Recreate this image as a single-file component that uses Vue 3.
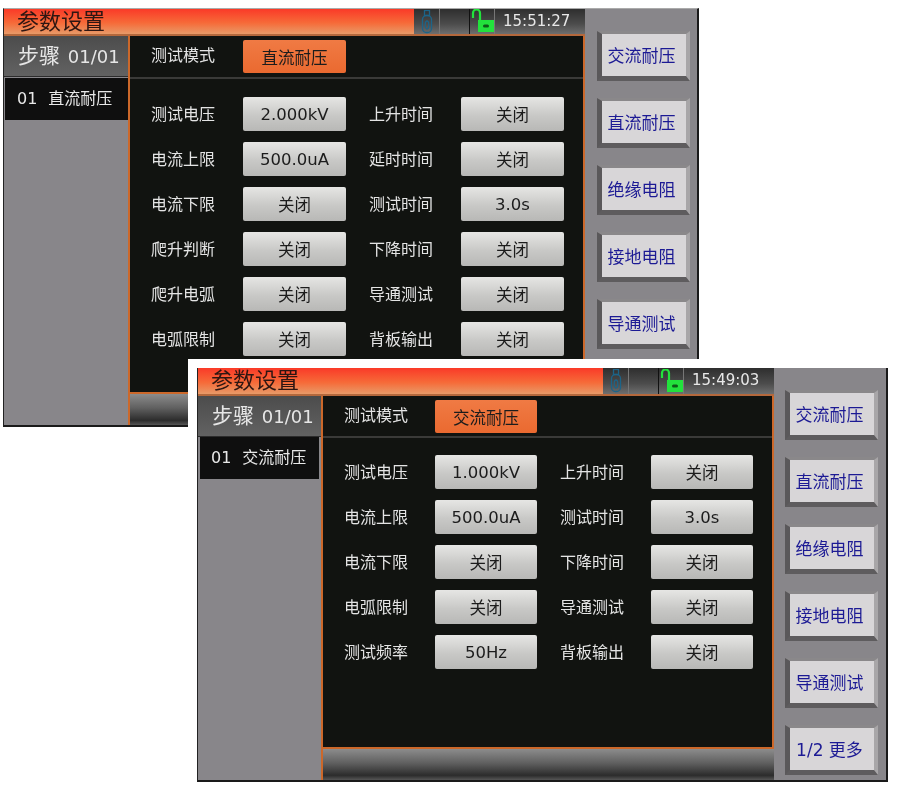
<template>
  <div class="desk">
    <div v-for="s in screens" :key="s.id" class="holder" :class="s.id">
      <div class="win">
        <div class="left">
          <!-- title bar -->
          <div class="titlebar">
            <div class="title">参数设置</div>
            <div class="status">
              <div class="cell usb">
                <svg width="14" height="24" viewBox="0 0 14 24" fill="none" stroke="#1c6488" stroke-width="1.3">
                  <rect x="4.5" y="0.5" width="5" height="5" />
                  <rect x="2.5" y="5.5" width="9" height="17" rx="4" />
                  <ellipse cx="7" cy="15" rx="1.8" ry="4" />
                </svg>
              </div>
              <div class="cell blank"></div>
              <div class="cell lock">
                <svg width="24" height="25" viewBox="0 0 24 25">
                  <path d="M3 9V4a3.5 3.5 0 0 1 7 0v7" fill="none" stroke="#22e23c" stroke-width="2.2" />
                  <rect x="8" y="11" width="16" height="12" fill="#22e23c" />
                  <rect x="13" y="15.5" width="6" height="3" rx="1.5" fill="#0d5a18" />
                </svg>
              </div>
              <div class="clock">{{ s.time }}</div>
            </div>
          </div>
          <div class="middle">
            <!-- step list -->
            <div class="side">
              <div class="step-head"><span class="step-cn">步骤</span> 01/01</div>
              <div class="step-row"><span class="step-no">01</span>{{ s.mode }}</div>
            </div>
            <!-- settings panel -->
            <div class="main">
              <div class="panel">
                <div class="mode-row">
                  <span class="label">测试模式</span>
                  <button class="val active">{{ s.mode }}</button>
                </div>
                <div class="params">
                  <template v-for="p in s.params" :key="p[0]">
                    <span class="label">{{ p[0] }}</span>
                    <button class="val">{{ p[1] }}</button>
                  </template>
                </div>
              </div>
              <div class="bottombar"></div>
            </div>
          </div>
        </div>
        <!-- soft keys -->
        <div class="keys">
          <button v-for="k in keys" :key="k" class="key">{{ k }}</button>
        </div>
      </div>
    </div>
  </div>
</template>

<script setup>
const keys = ['交流耐压', '直流耐压', '绝缘电阻', '接地电阻', '导通测试', '1/2 更多']

const screens = [
  {
    id: 'back',
    time: '15:51:27',
    mode: '直流耐压',
    params: [
      ['测试电压', '2.000kV'], ['上升时间', '关闭'],
      ['电流上限', '500.0uA'], ['延时时间', '关闭'],
      ['电流下限', '关闭'], ['测试时间', '3.0s'],
      ['爬升判断', '关闭'], ['下降时间', '关闭'],
      ['爬升电弧', '关闭'], ['导通测试', '关闭'],
      ['电弧限制', '关闭'], ['背板输出', '关闭']
    ]
  },
  {
    id: 'front',
    time: '15:49:03',
    mode: '交流耐压',
    params: [
      ['测试电压', '1.000kV'], ['上升时间', '关闭'],
      ['电流上限', '500.0uA'], ['测试时间', '3.0s'],
      ['电流下限', '关闭'], ['下降时间', '关闭'],
      ['电弧限制', '关闭'], ['导通测试', '关闭'],
      ['测试频率', '50Hz'], ['背板输出', '关闭']
    ]
  }
]
</script>

<style>
body {
  background: #fff;
}
</style>

<style scoped>
.desk {
  position: relative;
  width: 897px;
  height: 791px;
  overflow: hidden;
  background: #fff;
  font-family: "DejaVu Sans", "Noto Sans CJK SC", sans-serif;
  filter: blur(0.35px);
}

.holder {
  position: absolute;
}

.holder.back {
  left: 3px;
  top: 8px;
}

.holder.front {
  left: 188px;
  top: 359px;
  width: 709px;
  height: 432px;
  padding: 9px 0 0 9px;
  box-sizing: border-box;
  background: #fff;
}

.win {
  display: flex;
  box-sizing: border-box;
  background: #88868a;
  border-left: 1px solid #222;
  border-right: 2px solid #1a1a1a;
  border-bottom: 2px solid #1a1a1a;
  overflow: hidden;
}

.back .win {
  width: 696px;
  height: 419px;
  border-top: 1px solid #aaa;
}

.front .win {
  width: 691px;
  height: 414px;
}

.left {
  flex: 1;
  display: flex;
  flex-direction: column;
  min-width: 0;
}

.titlebar {
  display: flex;
  height: 25px;
  flex-shrink: 0;
  background: linear-gradient(180deg, #fa3a28 0%, #f66a38 55%, #e89a68 100%);
  border-bottom: 2px solid #b4683c;
}

.front .titlebar {
  height: 26px;
}

.title {
  flex: 1;
  padding-left: 13px;
  font-size: 22px;
  line-height: 25px;
  color: #2e1612;
}

.status {
  display: flex;
  width: 171px;
  background: linear-gradient(180deg, #2e2e2e 0%, #4c4c4c 60%, #6e6e6e 100%);
}

.cell {
  display: flex;
  align-items: center;
  justify-content: center;
  border-right: 1px solid #777;
  overflow: hidden;
}

.usb {
  width: 25px;
}

.blank {
  width: 29px;
  border-right: none;
}

.lock {
  width: 24px;
  border-left: 1px solid #111;
  border-right: 1px solid #777;
}

.clock {
  flex: 1;
  padding-left: 8px;
  font-size: 15px;
  line-height: 25px;
  color: #e8e8e8;
}

.middle {
  flex: 1;
  display: flex;
  min-height: 0;
}

.side {
  width: 124px;
  flex-shrink: 0;
}

.front .side {
  width: 123px;
}

.step-head {
  height: 41px;
  line-height: 40px;
  box-sizing: border-box;
  padding-left: 14px;
  font-size: 18px;
  color: #e6e6e6;
  background: linear-gradient(180deg, #4c4c4c 0%, #626262 100%);
  border-bottom: 1px solid #2c2c2c;
}

.step-cn {
  font-size: 21px;
  margin-right: 2px;
}

.step-row {
  height: 42px;
  box-sizing: border-box;
  margin: 0 2px;
  padding: 6px 0 0 11px;
  line-height: 30px;
  font-size: 16px;
  color: #e8e8e8;
  background: #0f0f0f;
}

.back .step-row {
  margin: 1px 0 0 1px;
  padding-left: 12px;
}

.step-no {
  margin-right: 11px;
}

.main {
  flex: 1;
  display: flex;
  flex-direction: column;
  min-width: 0;
  border-left: 2px solid #cc682a;
}

.panel {
  flex: 1;
  min-height: 0;
  background: #111310;
  border-right: 2px solid #cc682a;
  border-bottom: 2px solid #cc682a;
  padding-left: 21px;
}

.mode-row {
  display: flex;
  align-items: flex-start;
  margin-left: -21px;
  padding: 4px 0 4px 21px;
  border-bottom: 2px solid #3a3a38;
}

.front .mode-row {
  padding-bottom: 3px;
}

.mode-row .label {
  width: 92px;
  line-height: 31px;
}

.params {
  display: grid;
  grid-template-columns: 92px 103px 115px 103px;
  grid-auto-rows: 34px;
  row-gap: 11px;
  align-items: center;
  padding-top: 18px;
}

.params .label {
  margin-bottom: 2px;
}

.params .label:nth-child(4n + 3) {
  margin-left: 23px;
  white-space: nowrap;
}

.front .params {
  grid-template-columns: 91px 102px 114px 102px;
  padding-top: 17px;
}

.front .params .label {
  margin-bottom: 3px;
}

.front .mode-row .label {
  width: 91px;
}

.label {
  font-size: 16px;
  color: #e4e4e4;
}

.val {
  height: 34px;
  width: 100%;
  padding: 0;
  border: none;
  border-radius: 2px;
  font: inherit;
  font-size: 16.5px;
  color: #1c1c1c;
  background: linear-gradient(180deg, #e6e6e4 0%, #c8c8c6 55%, #b8b8b6 100%);
}

.mode-row .val {
  width: 103px;
  height: 33px;
  background: linear-gradient(180deg, #f07a44 0%, #ea6a30 100%);
}

.front .mode-row .val {
  width: 102px;
}

.bottombar {
  height: 31px;
  flex-shrink: 0;
  background: linear-gradient(180deg, #8c8c8c 0%, #606060 45%, #2c2c2c 85%, #555 100%);
}

.keys {
  width: 112px;
  flex-shrink: 0;
  display: flex;
  flex-direction: column;
  gap: 17px;
  padding: 22px 8px 0 11px;
  box-sizing: border-box;
}

.back .keys {
  padding: 22px 7px 0 12px;
}

.key {
  height: 50px;
  flex-shrink: 0;
  padding: 0 5px 2px 0;
  font: inherit;
  font-size: 17px;
  color: #1c1a94;
  background: #d8d6d8;
  border-style: solid;
  border-width: 3px 4px 5px 5px;
  border-color: #8a888a #a8a6a8 #5e5c5e #5a585a;
}
</style>
